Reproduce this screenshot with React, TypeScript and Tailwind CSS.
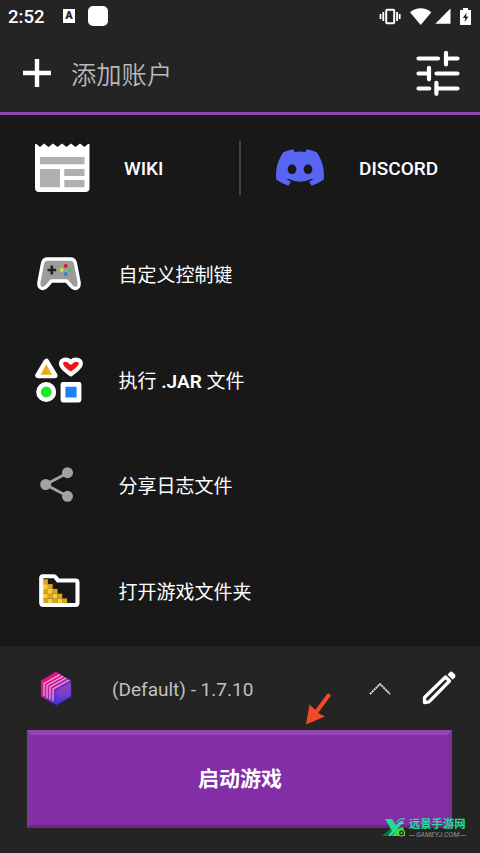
import type { ReactNode } from "react";

const FONT = "font-['Roboto','Noto_Sans_CJK_SC',sans-serif]";

const StatusBar = () => (
  <div className="flex h-8 items-center pl-2 pr-[9px]">
    <span className="w-[55px] pt-px text-[18.5px] leading-8 font-medium">2:52</span>
    <div className="flex h-[14px] w-3 justify-center bg-white text-[11px] leading-[14px] font-black text-[#242424]">A</div>
    <div className="ml-[13px] h-5 w-5 rounded-[5px] bg-white" />
    <div className="ml-auto flex items-center">
      {/* vibrate */}
      <svg width="22" height="17" viewBox="0 0 22 17" fill="none" stroke="white">
        <rect x="7.2" y="1.7" width="8" height="13.6" rx="1" strokeWidth="2" />
        <path d="M4.3 4v9M18.1 4v9M1.5 6v5M20.7 6v5" strokeWidth="1.8" />
      </svg>
      <svg className="ml-[9px]" width="22" height="17" viewBox="0 0 22 17" fill="white">
        <path d="M0 4.2C6.5-1.2 15 -1.2 21.3 4.2L10.7 17Z" />
      </svg>
      <svg className="ml-[3px]" width="16" height="16" viewBox="0 0 16 16" fill="white">
        <path d="M15.5.5V15.7H.3Z" />
      </svg>
      <svg className="ml-[9px]" width="11" height="17" viewBox="0 0 11 17">
        <path d="M3 0h5v2h3v15H0V2h3Z" fill="white" />
        <path d="M6.7 4.5 2.8 10h2.4L4.6 14 8.5 8.4H6Z" fill="#242424" />
      </svg>
    </div>
  </div>
);

const Header = () => (
  <header className="h-[115px] border-b-[3px] border-[#8b49ac] bg-[#242424]">
    <StatusBar />
    <div className="flex h-20 items-center pt-[2px] pl-[23px] pr-5">
      <svg width="28" height="28" viewBox="0 0 28 28">
        <path d="M0 14h28M14 0v28" stroke="white" strokeWidth="4.4" />
      </svg>
      <span className="ml-5 pt-[5px] text-[25.3px] leading-8 font-[350] text-[#b9b9b9]">添加账户</span>
      <svg className="ml-auto" width="44" height="46" viewBox="0 0 44 46" stroke="white" strokeWidth="4.2" strokeLinecap="round">
        <path d="M2.5 8.5H22M30 2.9v11.5M31 8.5h10.5" />
        <path d="M2.5 23.5H12M13 17.8v11.5M20.5 23.5h21" />
        <path d="M2.5 38.5h10.7M20.4 32.8v11M21 38.5h20.5" />
      </svg>
    </div>
  </header>
);

const NewsIcon = () => (
  <svg width="55" height="50" viewBox="0 0 55 50">
    <path d="M0 1 1.5 1 5 4 9 .5 13.5 4 18 .5 22.5 4 27 .5 31.5 4 36 .5 40.5 4 45 .5 49.5 4 53 1H54.5V45Q54.5 49 50.5 49H4Q0 49 0 45Z" fill="white" />
    <path d="M5 14h44.5v7.3H5ZM5 26h20v18.3H5ZM29.3 26h20.2v7H29.3ZM29.3 37h20.2v7.3H29.3Z" fill="#b0b0b0" />
  </svg>
);

const DiscordIcon = () => (
  <svg width="48" height="37" viewBox="0 0 127.14 96.36" fill="#5865f2">
    <path d="M107.7,8.07A105.15,105.15,0,0,0,81.47,0a72.06,72.06,0,0,0-3.36,6.83A97.68,97.68,0,0,0,49,6.83,72.37,72.37,0,0,0,45.64,0,105.89,105.89,0,0,0,19.39,8.09C2.79,32.65-1.71,56.6.54,80.21h0A105.73,105.73,0,0,0,32.71,96.36,77.7,77.7,0,0,0,39.6,85.25a68.42,68.42,0,0,1-10.85-5.18c.91-.66,1.8-1.34,2.66-2a75.57,75.57,0,0,0,64.32,0c.87.71,1.76,1.39,2.66,2a68.68,68.68,0,0,1-10.87,5.19,77,77,0,0,0,6.89,11.1A105.25,105.25,0,0,0,126.6,80.22h0C129.24,52.84,122.09,29.11,107.7,8.07ZM42.45,65.69C36.18,65.69,31,60,31,53s5-12.74,11.43-12.74S54,46,53.89,53,48.84,65.69,42.45,65.69Zm42.24,0C78.41,65.69,73.25,60,73.25,53s5-12.74,11.44-12.74S96.23,46,96.12,53,91.08,65.69,84.69,65.69Z" />
  </svg>
);

const GamepadIcon = () => (
  <svg width="44" height="34" viewBox="0 0 46 34" preserveAspectRatio="none">
    <path d="M11 2h24q4 0 5.2 4L44 25q.8 6.5-4.2 6.5-2.5 0-4.3-2.5L31 24H15L10.5 29q-1.8 2.5-4.3 2.5-5 0-4.2-6.5L5.8 6Q7 2 11 2Z" fill="#9c9c9c" stroke="white" strokeWidth="3.4" strokeLinejoin="round" />
    <path d="M15.5 8.5v9M11 13h9" stroke="#222" strokeWidth="2.7" />
    <circle cx="30" cy="9" r="2" fill="#d3183c" />
    <circle cx="25.8" cy="13" r="2" fill="#e5dc3c" />
    <circle cx="34.2" cy="13" r="2" fill="#4fc24c" />
    <circle cx="30" cy="17" r="2" fill="#2f7ed2" />
  </svg>
);

const ShapesIcon = () => (
  <svg className="mt-px" width="49" height="46" viewBox="0 0 49 46" strokeLinejoin="round">
    <path d="M11.3 4.5 3 18.5h16.8Z" fill="#f0a818" stroke="white" strokeWidth="5.5" />
    <path d="M11.3 7.2 5.6 17.7h11.4Z" fill="#f0a818" />
    <path d="M35.8 17.3C31.5 14 26 11 26 6.5 26 2.5 32 .8 35.8 5.3 39.6.8 45.8 2.5 45.8 6.5 45.8 11 40 14 35.8 17.3Z" fill="#f01414" stroke="white" strokeWidth="4.2" />
    <circle cx="11.2" cy="35" r="7.7" fill="#1de92c" stroke="white" strokeWidth="4.6" />
    <rect x="28" y="27.3" width="16" height="15.7" fill="#1f80f5" stroke="white" strokeWidth="4.8" />
  </svg>
);

const ShareIcon = () => (
  <svg className="mr-1" width="34" height="35" viewBox="0 0 34 35" fill="#a2a2a2">
    <path d="M28 5.7 5.6 17.5 28 29.5" fill="none" stroke="#a2a2a2" strokeWidth="2.8" />
    <circle cx="27.5" cy="5.7" r="5.5" />
    <circle cx="5.7" cy="17.5" r="5.5" />
    <circle cx="27.5" cy="29.3" r="5.5" />
  </svg>
);

// height of each stair column, in blocks
const STAIRS = [5, 4, 3, 2, 1];

const FolderIcon = () => (
  <svg width="41" height="34" viewBox="0 0 41 34">
    {STAIRS.map((count, col) =>
      Array.from({ length: count }, (_, row) => (
        <rect key={`${col}-${row}`} x={4 + col * 4.8} y={24.5 - row * 4.8} width="4.9" height="4.9" fill={(col + row) % 2 ? "#f3d040" : "#dda51e"} />
      )),
    )}
    <path d="M4 2.2h10.5q1.5 0 2.5 1.5L19 6.5H36.5q2 0 2 2V28.5q0 2.5-2 2.5H4.5q-2.3 0-2.3-2.5V4q0-1.8 1.8-1.8Z" fill="none" stroke="white" strokeWidth="4.1" strokeLinejoin="round" />
  </svg>
);

const CubeIcon = () => (
  <svg width="32" height="35" viewBox="0 0 32 35">
    <defs>
      <linearGradient id="cube" x1="0" y1="0" x2=".75" y2="1">
        <stop offset="0" stopColor="#ff0870" />
        <stop offset=".4" stopColor="#d21a98" />
        <stop offset=".7" stopColor="#7a30d0" />
        <stop offset="1" stopColor="#1a1aee" />
      </linearGradient>
      <linearGradient id="cubeFace" x1="0" y1="0" x2="0" y2="1">
        <stop offset="0" stopColor="#a044b8" />
        <stop offset=".6" stopColor="#6f3fc8" />
        <stop offset="1" stopColor="#3030e8" />
      </linearGradient>
    </defs>
    <path d="M16 .8 31 9.5V25.5L16 34 1 25.5V9.5Z" fill="url(#cube)" />
    <path d="M4 25V12.5L20 3.5M7 27V14.2L23 5.2M10 28.5V16L26 7M13 30V18L29 9" fill="none" stroke="#f0b4dc" strokeWidth="1.1" />
    <path d="M16 19 31 10.5V25.5L16 34Z" fill="url(#cubeFace)" stroke="#3a28e0" strokeWidth=".7" />
  </svg>
);

type MenuRowProps = { icon: ReactNode; children: ReactNode };

const MenuRow = ({ icon, children }: MenuRowProps) => (
  <li className="flex h-[105.7px] items-center">
    <div className="flex w-[118.5px] shrink-0 justify-center">{icon}</div>
    <span className="pt-[5px] text-[19px] leading-7 whitespace-pre text-white">{children}</span>
  </li>
);

const Watermark = () => (
  <div className="absolute top-[818px] left-[382px] flex">
    <svg width="25" height="20" viewBox="0 0 25 20">
      <path d="M3 1h7l4 6-5 5-1-3Z" fill="#20df91" />
      <path d="M14 7 18 3h4L14 13l-5 5H3Z" fill="#20df91" />
      <path d="M0 18 8 11l2 2-4 5Z" fill="#087a48" />
      <path d="M14 4l4-3h5M17 5.5h5" stroke="#35eda3" strokeWidth="1" fill="none" />
      <path d="M10 18q4-8 11-9l2 9Z" fill="#24dc6b" />
      <circle cx="19.5" cy="15" r="3.2" fill="#163e28" stroke="#75e936" strokeWidth="1" />
      <circle cx="19.5" cy="15" r="1" fill="#5bd639" />
    </svg>
    <div className="ml-[2px] w-[57px]">
      <div className="h-[13px] pt-px text-[11.3px] leading-3 font-bold whitespace-nowrap text-[#20dfa0]">远景手游网</div>
      <div className="flex h-2 items-center gap-px text-[7px] leading-2 text-[#8f9791] italic">
        <i className="h-px flex-1 bg-[#697069]" />
        GAMEYJ.COM
        <i className="h-px flex-1 bg-[#697069]" />
      </div>
    </div>
  </div>
);

const Footer = () => (
  <footer className="h-[207px] bg-[#242424]">
    <div className="flex h-[84px] items-center pl-10 pr-6">
      <CubeIcon />
      <span className="ml-10 pt-[3px] text-[19px] leading-7 text-[#c0c0c0]">(Default) - 1.7.10</span>
      <svg className="mt-px ml-auto" width="22" height="12" viewBox="0 0 22 12">
        <path d="M1 11 11 1 21 11" fill="none" stroke="#e8e8e8" strokeWidth="1.8" strokeDasharray="2.1 .6" />
      </svg>
      <svg className="ml-[31px]" width="34" height="34" viewBox="0 0 34 34">
        <path d="M2.5 26.5 23.5 6 27.5 10 7 30.8 2.5 31.5Z" fill="none" stroke="white" strokeWidth="3.3" strokeLinejoin="round" />
        <path d="M25.5 3.5 28 1Q29.5 0 31 1.5L33 3.5Q34 5 33 6.2L30.5 8.7Z" fill="white" />
      </svg>
    </div>
    <button className="ml-[27px] block h-[98px] w-[425px] border-t-[5px] border-r-[4px] border-b-[3px] border-l-[3px] border-t-[#9446b3] border-r-[#7d3098] border-b-[#6d2783] border-l-[#773e8d] bg-[#832da6] pl-[2px] text-[21px] font-bold text-white">
      启动游戏
    </button>
  </footer>
);

export default function App() {
  return (
    <div className={`relative h-[853px] w-[480px] overflow-hidden bg-[#181818] text-white ${FONT}`}>
      <Header />
      <main className="h-[531px]">
        <div className="flex h-[105.7px] items-center text-[19px] font-medium">
          <div className="flex w-[239px] items-center pl-[35px]">
            <NewsIcon />
            <span className="ml-[34px] pt-[2px]">WIKI</span>
          </div>
          <div className="h-[54px] w-[2px] bg-[#424242]" />
          <div className="flex items-center pl-[35px]">
            <DiscordIcon />
            <span className="ml-[35px] pt-[2px]">DISCORD</span>
          </div>
        </div>
        <ul>
          <MenuRow icon={<GamepadIcon />}>自定义控制键</MenuRow>
          <MenuRow icon={<ShapesIcon />}>
            执行 <span className="font-semibold">.JAR</span> 文件
          </MenuRow>
          <MenuRow icon={<ShareIcon />}>分享日志文件</MenuRow>
          <MenuRow icon={<FolderIcon />}>打开游戏文件夹</MenuRow>
        </ul>
      </main>
      <Footer />
      {/* tutorial arrow pointing at the launch button */}
      <svg className="absolute top-[693px] left-[306px]" width="26" height="32" viewBox="0 0 26 32">
        <path d="M22.5 2.5 11 18" stroke="#f04a26" strokeWidth="4" strokeLinecap="round" />
        <path d="M0 31.5 3.5 11.5 9.5 17 13 20.5 19 23.5Z" fill="#f04a26" />
      </svg>
      <Watermark />
    </div>
  );
}
